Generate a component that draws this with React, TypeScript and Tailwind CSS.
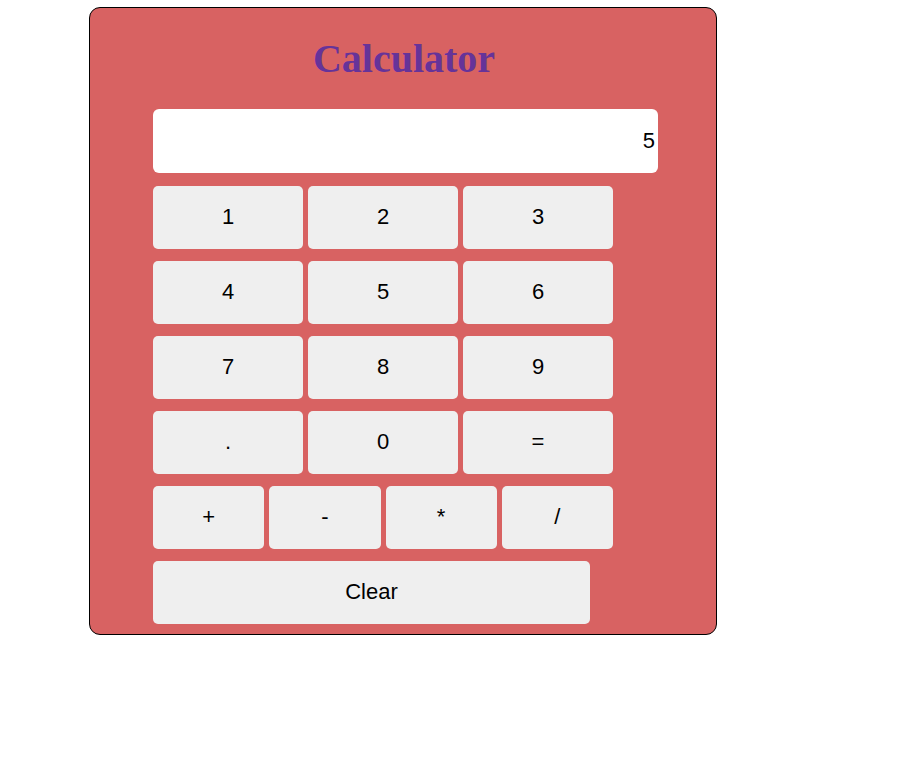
const rows = [
  ["1", "2", "3"],
  ["4", "5", "6"],
  ["7", "8", "9"],
  [".", "0", "="],
];

const ops = ["+", "-", "*", "/"];

function Key({ label }: { label: string }) {
  return (
    <button className="flex h-[62.5px] flex-1 items-center justify-center rounded-[5px] bg-[#efefef] pb-[1px] text-[22px] text-black">
      {label}
    </button>
  );
}

export default function App() {
  return (
    <div className="min-h-[765px] bg-white pl-[89px] pt-[7px] font-['Liberation_Sans',Arial,sans-serif]">
      <div className="flex h-[628px] w-[628px] flex-col rounded-[11px] border border-black bg-[#d86262] pl-[63px] pt-[28px]">
        {/* Title */}
        <h1 className="w-[502px] text-center font-['Liberation_Serif',serif] text-[40px] font-bold leading-[46px] text-[#663399]">
          Calculator
        </h1>

        {/* Display */}
        <div className="mt-[27px] flex h-[64px] w-[505px] items-center justify-end rounded-[6px] bg-white pb-[1px] pr-[3px] text-[22px] text-black">
          5
        </div>

        {/* Keys */}
        <div className="mt-[13px] flex w-[460px] flex-col gap-[12.5px]">
          {rows.map((row) => (
            <div key={row.join("")} className="flex gap-[5px]">
              {row.map((k) => (
                <Key key={k} label={k} />
              ))}
            </div>
          ))}

          <div className="flex gap-[5px]">
            {ops.map((k) => (
              <Key key={k} label={k} />
            ))}
          </div>

          <button className="flex h-[62.5px] w-[437px] items-center justify-center rounded-[5px] bg-[#efefef] pb-[1px] text-[22px] text-black">
            Clear
          </button>
        </div>
      </div>
    </div>
  );
}
